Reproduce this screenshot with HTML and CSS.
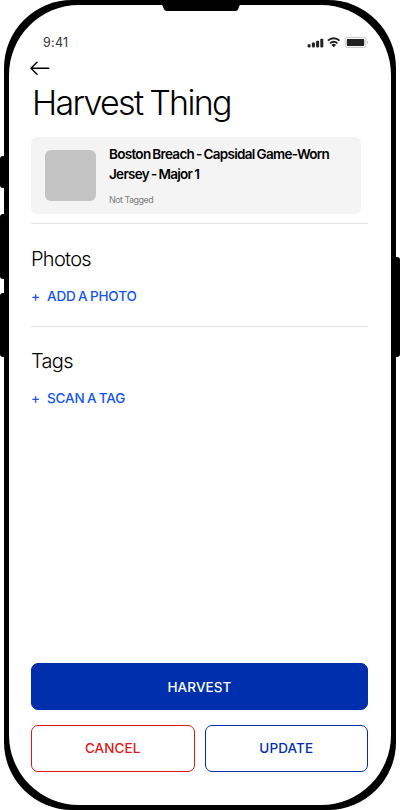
FILE: index.html
```html
<!DOCTYPE html>
<html lang="en">
<head>
  <meta charset="UTF-8">
  <title>Harvest Thing</title>
  <link rel="stylesheet" href="styles.css">
</head>
<body>

  <div class="phone">
    <span class="side-button mute"></span>
    <span class="side-button volume-up"></span>
    <span class="side-button volume-down"></span>
    <span class="side-button power"></span>
    <svg class="notch" width="80" height="12" viewBox="0 0 80 12">
      <path d="M0 0H80V4.8C78.5 5 78.2 6 77.6 8C77 10 76.2 11 74.5 11H6C4 11 3.2 10 2.5 8C1.9 6 1.5 5 0 4.8Z"/>
    </svg>

    <div class="screen">
      <div class="status-bar">
        <span class="time">9:41</span>
        <svg width="62" height="12" viewBox="0 0 62 12">
          <g fill="#222">
            <rect x="0.6" y="8.2" width="3" height="3.2" rx="0.8"/>
            <rect x="4.9" y="6.5" width="3" height="4.9" rx="0.8"/>
            <rect x="9.1" y="4.7" width="3" height="6.7" rx="0.8"/>
            <rect x="13.3" y="2.8" width="3" height="8.6" rx="0.8"/>
            <path d="M24.4 8.9L26.7 11.2L29 8.9A3.2 3.2 0 0 0 24.4 8.9Z"/>
            <rect x="39.8" y="3" width="17.4" height="7" rx="0.8"/>
          </g>
          <g fill="none" stroke="#222" stroke-width="1.8">
            <path d="M20.9 4.6A8.3 8.3 0 0 1 32.5 4.6"/>
            <path d="M23 7.3A5.2 5.2 0 0 1 30.4 7.3"/>
          </g>
          <rect x="38.2" y="1.4" width="20.6" height="10" rx="2" fill="none" stroke="#c6c6c6"/>
          <path d="M60 4.9V8.1C61.3 7.6 61.3 5.4 60 4.9Z" fill="#bbb"/>
        </svg>
      </div>

      <a class="back" href="#">
        <svg width="20" height="14" viewBox="0 0 20 14" fill="none" stroke="#000" stroke-width="1.5" stroke-linecap="round" stroke-linejoin="round">
          <path d="M18.7 7.3H1M7 1.3L1 7.3L7 13.3"/>
        </svg>
      </a>

      <h1>Harvest Thing</h1>

      <div class="item-card">
        <div class="thumb"></div>
        <div class="item-info">
          <div class="item-name">Boston Breach - Capsidal Game-Worn<br>Jersey - Major 1</div>
          <div class="item-status">Not Tagged</div>
        </div>
      </div>

      <div class="section">
        <h2>Photos</h2>
        <a class="add-link" href="#"><span class="plus">+</span><span>ADD A PHOTO</span></a>
      </div>

      <div class="section">
        <h2>Tags</h2>
        <a class="add-link" href="#"><span class="plus">+</span><span>SCAN A TAG</span></a>
      </div>

      <div class="actions">
        <button class="harvest">HARVEST</button>
        <div class="action-row">
          <button class="cancel">CANCEL</button>
          <button class="update">UPDATE</button>
        </div>
      </div>
    </div>
  </div>

</body>
</html>
```

FILE: styles.css
```css
* {
  box-sizing: border-box;
}

body {
  margin: 0;
  background-color: white;
  font-family: Inter, "Liberation Sans", sans-serif;
  overflow: hidden;
}

.phone {
  position: relative;
  width: 391.5px;
  height: 810px;
  margin-left: 4px;
  padding: 5px 4.5px 5.5px;
  background-color: black;
  border-radius: 68px;
}

.screen {
  display: flex;
  flex-direction: column;
  height: 100%;
  padding: 29px 23px 33px 22.5px;
  background-color: white;
  border-radius: 70px;
}

.notch {
  position: absolute;
  top: 0;
  left: 157px;
}

.side-button {
  position: absolute;
  left: -4px;
  width: 6px;
  background-color: black;
  border-radius: 3px 0 0 3px;
}

.mute {
  top: 156px;
  height: 32px;
}

.volume-up {
  top: 214px;
  height: 65px;
}

.volume-down {
  top: 293px;
  height: 64px;
}

.power {
  top: 257px;
  left: auto;
  right: -4.5px;
  height: 100px;
  border-radius: 0 3px 3px 0;
}

.status-bar {
  display: flex;
  align-items: center;
  justify-content: space-between;
  height: 16px;
  padding-left: 12px;
  margin-right: -1px;
}

.time {
  font-size: 12.5px;
  letter-spacing: 0.3px;
  color: #333;
}

.back {
  display: block;
  height: 14px;
  margin: 11px 0 0 -1.5px;
}

.back svg {
  display: block;
}

h1 {
  margin: 7px 0 0 1px;
  font-size: 34px;
  font-weight: 350;
  line-height: 42px;
  letter-spacing: -1.7px;
  word-spacing: -1px;
  white-space: nowrap;
}

.item-card {
  display: flex;
  width: 330px;
  height: 77px;
  margin-top: 13px;
  padding: 13px 0 0 13.5px;
  background-color: #f4f4f4;
  border-radius: 6px;
}

.thumb {
  width: 51px;
  height: 51px;
  background-color: #c4c4c4;
  border-radius: 6px;
}

.item-info {
  margin: -6px 0 0 13.5px;
}

.item-name {
  font-size: 13.5px;
  font-weight: 600;
  line-height: 20px;
  letter-spacing: -0.7px;
  word-spacing: -0.8px;
  white-space: nowrap;
}

.item-status {
  margin-top: 10px;
  font-size: 9px;
  line-height: 12px;
  letter-spacing: -0.55px;
  color: #7d7d7d;
}

.section {
  height: 102.5px;
  padding-top: 21.5px;
  border-top: 1px solid #dfe3ea;
}

.item-card + .section {
  margin-top: 9px;
}

h2 {
  margin: 0;
  font-size: 20px;
  font-weight: 350;
  line-height: 26px;
  letter-spacing: -0.7px;
}

.add-link {
  display: flex;
  margin-top: 15px;
  font-size: 13.5px;
  font-weight: 550;
  line-height: 18px;
  letter-spacing: -0.15px;
  word-spacing: -1px;
  color: #1554f0;
  text-decoration: none;
}

.plus {
  width: 16px;
}

.actions {
  margin-top: auto;
}

button {
  display: block;
  width: 100%;
  height: 47px;
  padding: 0;
  border: 1px solid #002fad;
  border-radius: 7px;
  background-color: white;
  color: #002fad;
  font-family: inherit;
  font-size: 13.5px;
  font-weight: 550;
  letter-spacing: 0.1px;
}

.harvest {
  background-color: #002fad;
  color: white;
}

.action-row {
  display: flex;
  gap: 10px;
  margin-top: 14.5px;
}

.cancel {
  border-color: #dd1717;
  color: #dd1717;
}
```
